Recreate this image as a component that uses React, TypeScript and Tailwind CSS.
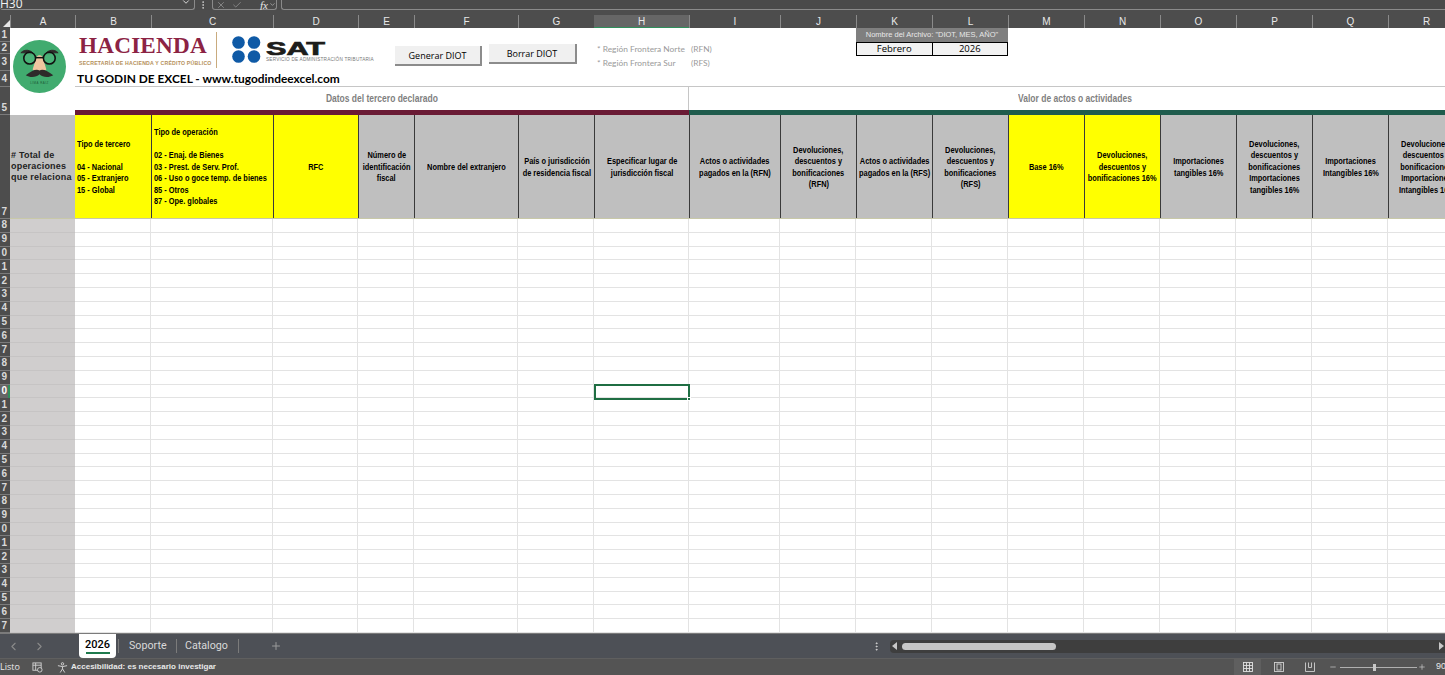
import { Check, ChevronDown, ChevronLeft, ChevronRight, EllipsisVertical, Minus, Plus, X } from 'lucide-react';

const columns = [
  { name: 'A', w: 65 },
  { name: 'B', w: 76 },
  { name: 'C', w: 122 },
  { name: 'D', w: 85 },
  { name: 'E', w: 56 },
  { name: 'F', w: 104 },
  { name: 'G', w: 76 },
  { name: 'H', w: 95 },
  { name: 'I', w: 91 },
  { name: 'J', w: 76 },
  { name: 'K', w: 76 },
  { name: 'L', w: 76 },
  { name: 'M', w: 76 },
  { name: 'N', w: 76 },
  { name: 'O', w: 76 },
  { name: 'P', w: 76 },
  { name: 'Q', w: 76 },
  { name: 'R', w: 76 },
];

const headers = [
  { lines: ['Número de', 'identificación', 'fiscal'], w: 56 },
  { lines: ['Nombre del extranjero'], w: 104 },
  { lines: ['País o jurisdicción', 'de residencia fiscal'], w: 76 },
  { lines: ['Especificar lugar de', 'jurisdicción fiscal'], w: 95 },
  { lines: ['Actos o actividades', 'pagados en la (RFN)'], w: 91 },
  { lines: ['Devoluciones,', 'descuentos y', 'bonificaciones', '(RFN)'], w: 76 },
  { lines: ['Actos o actividades', 'pagados en la (RFS)'], w: 76 },
  { lines: ['Devoluciones,', 'descuentos y', 'bonificaciones', '(RFS)'], w: 76 },
  { lines: ['Base 16%'], w: 76, yellow: true },
  { lines: ['Devoluciones,', 'descuentos y', 'bonificaciones 16%'], w: 76, yellow: true },
  { lines: ['Importaciones', 'tangibles 16%'], w: 76 },
  { lines: ['Devoluciones,', 'descuentos y', 'bonificaciones', 'Importaciones', 'tangibles 16%'], w: 76 },
  { lines: ['Importaciones', 'Intangibles 16%'], w: 76 },
  { lines: ['Devoluciones,', 'descuentos y', 'bonificaciones', 'Importaciones', 'Intangibles 16%'], w: 76 },
];

const topRows = [
  { n: '1', h: 14, end: false },
  { n: '2', h: 12, end: false },
  { n: '3', h: 17, end: false },
  { n: '4', h: 16, end: false },
  { n: '5', h: 28, end: true },
  { n: '7', h: 104, end: true },
];

const rows = Array.from({ length: 30 }, (_, i) => i + 8);

function Logo() {
  return (
    <svg viewBox="0 0 54 54" className="h-[53px] w-[53px]">
      <circle cx="27" cy="27" r="27" fill="#41ab6f" />
      <path d="M8 13c4-4 10-3 13 1l-4 0c-3-1-6-1-9-1zM46 13c-4-4-10-3-13 1l4 0c3-1 6-1 9-1z" fill="#2e2a2a" stroke="#2e2a2a" strokeWidth="1" />
      <path d="M24 17c2-2 4-2 6 0l4 13c-3 3-11 3-14 0z" fill="#f0c5a0" />
      <circle cx="17" cy="18.5" r="6" fill="#4fb67c" fillOpacity="0.7" stroke="#111" strokeWidth="1.6" />
      <circle cx="37" cy="18.5" r="6" fill="#4fb67c" fillOpacity="0.7" stroke="#111" strokeWidth="1.6" />
      <path d="M23 18h8" stroke="#111" strokeWidth="1.5" />
      <path d="M27 31c-3-2-8 0-14 5 5 3 11 2 14-1 3 3 9 4 14 1-6-5-11-7-14-5z" fill="#2e2a2a" />
      <text x="27" y="45" textAnchor="middle" fontSize="3" fill="#1f5c3a" letterSpacing="0.5">
        LIMA RAIZ
      </text>
    </svg>
  );
}

function SatBlue() {
  return (
    <svg viewBox="0 0 31 27" className="h-[27px] w-[31px]">
      <circle cx="7.5" cy="6.5" r="6.3" fill="#0f5aa6" />
      <circle cx="23" cy="6.5" r="6.3" fill="#0f5aa6" />
      <circle cx="7.5" cy="20.5" r="6.3" fill="#0f5aa6" />
      <circle cx="23" cy="20.5" r="6.3" fill="#0f5aa6" />
    </svg>
  );
}

export default function App() {
  return (
    <div className="flex h-[675px] w-[1445px] flex-col overflow-hidden bg-white font-['Liberation_Sans',sans-serif]">
      {/* Formula bar */}
      <div className="flex h-[10px] shrink-0 items-end overflow-hidden bg-[#4a4a4a] text-[#f2f2f2]">
        <div className="flex h-[10px] w-[195px] items-end justify-between overflow-hidden rounded-b-[3px] border-b border-r border-[#8a8a8a] pr-[3px] text-[12px] leading-[12px]">
          <span className="mb-[-1px] font-['Open_Sans',sans-serif]">H30</span>
          <ChevronDown size={10} className="mb-[2px]" />
        </div>
        <EllipsisVertical size={10} className="ml-[3px] text-[#d0d0d0]" />
        <div className="ml-[4px] flex h-[10px] w-[65px] items-center rounded-b-[3px] border-x border-b border-[#8a8a8a] pl-[3px] text-[#8f8f8f]">
          <X size={10} />
          <Check size={10} className="ml-[6px]" />
          <span className="ml-[18px] font-['Liberation_Serif',serif] text-[11px] italic leading-[10px] text-[#e8e8e8]">fx</span>
          <ChevronDown size={7} className="ml-[1px] text-[#c8c8c8]" />
        </div>
        <div className="ml-[4px] h-[10px] flex-1 rounded-bl-[3px] border-b border-l border-[#8a8a8a]" />
      </div>

      {/* Column letters */}
      <div className="flex h-[18px] shrink-0 bg-[#4d4d4d] pt-[5px]">
        <div className="flex w-[10px] shrink-0 items-end justify-end">
          <div className="mb-[1px] h-0 w-0 border-b-[7px] border-l-[7px] border-b-[#e6e6e6] border-l-transparent" />
        </div>
        {columns.map((c) => (
          <div
            key={c.name}
            style={{ width: c.w }}
            className={
              c.name === 'H'
                ? 'flex shrink-0 items-center justify-center border-b border-[#2f8f5b] bg-[#666666] text-[10px] text-[#e8e8e8]'
                : 'flex shrink-0 items-center justify-center border-l border-[#8a8a8a] text-[10px] text-[#e8e8e8]'
            }
          >
            {c.name}
          </div>
        ))}
      </div>

      {/* Sheet */}
      <div className="flex min-h-0 flex-1">
        {/* Row numbers */}
        <div className="flex w-[10px] shrink-0 flex-col overflow-hidden bg-[#4d4d4d] text-[10px] font-bold text-[#d9d9d9]">
          {topRows.map((r) => (
            <div
              key={r.n}
              style={{ height: r.h }}
              className={
                r.end
                  ? 'flex shrink-0 items-end justify-end border-b border-[#7b7b7b] pr-[3px] leading-[12px]'
                  : 'flex shrink-0 items-center justify-end border-b border-[#7b7b7b] pr-[3px] leading-[12px]'
              }
            >
              {r.n}
            </div>
          ))}
          {rows.map((r) => (
            <div
              key={r}
              className={
                r === 20
                  ? 'flex h-[13.8px] shrink-0 items-center justify-end border-r-2 border-[#2f8f5b] bg-[#666666] pr-[1px] leading-none text-white'
                  : 'flex h-[13.8px] shrink-0 items-center justify-end border-b border-[#7b7b7b] pr-[3px] leading-none'
              }
            >
              {r % 10}
            </div>
          ))}
        </div>

        <div className="min-w-0 flex-1 overflow-hidden">
          {/* Top area, the floating shapes of the sheet */}
          <div className="relative flex h-[59px] w-[1500px] bg-white">
            <div className="w-[65px] shrink-0" />
            <div className="flex-1 border-b border-[#c6c6c6] pl-[4px] pt-[4px]">
              <div className="flex flex-col">
                <span className="font-['Liberation_Serif',serif] text-[23.2px] font-bold leading-[27px] tracking-[0.2px] text-[#8c2344]">HACIENDA</span>
                <span className="whitespace-nowrap text-[5.2px] font-bold leading-[8px] tracking-[0.2px] text-[#b5905a]">SECRETARÍA DE HACIENDA Y CRÉDITO PÚBLICO</span>
              </div>
            </div>
            <div className="absolute left-[206px] top-[4px] h-[36px] w-px bg-[#c9ab7e]" />
            <div className="absolute left-[221px] top-[8px] flex items-center gap-[4px]">
              <SatBlue />
              <div className="flex flex-col pt-[4px]">
                <span className="origin-left scale-x-[1.7] text-[18px] font-black leading-[16px] text-[#1d1d1b] [-webkit-text-stroke:0.7px_#1d1d1b]">SAT</span>
                <span className="whitespace-nowrap text-[4.7px] leading-[6px] tracking-[0.2px] text-[#777777]">SERVICIO DE ADMINISTRACIÓN TRIBUTARIA</span>
              </div>
            </div>
            <span className="absolute left-[67px] top-[43px] font-['Lato',sans-serif] text-[11.9px] font-bold leading-[16px] text-black">TU GODIN DE EXCEL - www.tugodindeexcel.com</span>

            {/* Buttons */}
            <div className="absolute left-[385px] top-[18px] flex h-[20px] w-[87px] items-center justify-center border-b-2 border-r-2 border-[#8c8c8c] bg-[#f0f0f0] pt-[1px] font-['Open_Sans',sans-serif] text-[9px] text-black">Generar DIOT</div>
            <div className="absolute left-[479px] top-[16px] flex h-[20px] w-[88px] items-center justify-center border-b-2 border-r-2 border-[#8c8c8c] bg-[#f0f0f0] pt-[1px] font-['Open_Sans',sans-serif] text-[9px] text-black">Borrar DIOT</div>

            <div className="absolute left-[587px] top-[15.5px] flex flex-col gap-[3px] whitespace-nowrap font-['Lato',sans-serif] text-[8.4px] leading-[11px] text-[#9a9a9a]">
              <div className="flex"><span className="w-[94px]">* Región Frontera Norte</span><span>(RFN)</span></div>
              <div className="flex"><span className="w-[94px]">* Región Frontera Sur</span><span>(RFS)</span></div>
            </div>

            {/* File name */}
            <div className="absolute left-[846px] top-0 w-[152px]">
              <div className="flex h-[14px] items-center justify-center whitespace-nowrap bg-[#7f7f7f] text-[7.5px] text-[#e8e8e8]">Nombre del Archivo: "DIOT, MES, AÑO"</div>
              <div className="flex h-[14px] border border-black bg-[#f2f2f2] font-['Open_Sans',sans-serif] text-[9.5px] text-black">
                <div className="flex flex-1 items-center justify-center border-r border-black">Febrero</div>
                <div className="flex flex-1 items-center justify-center">2026</div>
              </div>
            </div>

            <div className="absolute left-[2.5px] top-[12px]"><Logo /></div>
          </div>

          {/* Section titles */}
          <div className="flex w-[1500px]">
            <div className="h-[28px] w-[65px] shrink-0 bg-white" />
            <div className="flex w-[614px] shrink-0 flex-col">
              <div className="flex h-[23px] items-center justify-center border-r border-[#c6c6c6] text-[10px] font-bold text-[#7f7f7f]">
                <span className="scale-x-[0.85] whitespace-nowrap">Datos del tercero declarado</span>
              </div>
              <div className="h-[5px] bg-[#6a1b35]" />
            </div>
            <div className="flex flex-1 flex-col">
              <div className="flex h-[23px] w-[771px] items-center justify-center text-[10px] font-bold text-[#7f7f7f]">
                <span className="scale-x-[0.85] whitespace-nowrap">Valor de actos o actividades</span>
              </div>
              <div className="h-[5px] bg-[#1f5c4d]" />
            </div>
          </div>

          {/* Header row */}
          <div className="flex h-[104px] w-[1500px] border-b border-[#c8c8a8] text-[9.5px] font-bold leading-[11.5px] text-black">
            <div className="flex w-[65px] shrink-0 items-center whitespace-pre bg-[#bfbfbf] pl-[1px] text-[9px] leading-[11.2px] tracking-[0.2px] text-[#222222]">
              {'# Total de\noperaciones\nque relaciona'}
            </div>
            <div className="flex w-[76px] shrink-0 flex-col justify-center whitespace-pre bg-[#ffff00] pl-[2px]">
              <span className="origin-left scale-x-[0.78]">{'Tipo de tercero\n\n04 - Nacional\n05 - Extranjero\n15 - Global'}</span>
            </div>
            <div className="flex w-[122px] shrink-0 flex-col justify-center whitespace-pre border-l border-[#3a3a3a] bg-[#ffff00] pl-[2px]">
              <span className="origin-left scale-x-[0.78]">{'Tipo de operación\n\n02 - Enaj. de Bienes\n03 - Prest. de Serv. Prof.\n06 - Uso o goce temp. de bienes\n85 - Otros\n87 - Ope. globales'}</span>
            </div>
            <div className="flex w-[85px] shrink-0 items-center justify-center border-l border-[#3a3a3a] bg-[#ffff00]">
              <span className="scale-x-[0.78]">RFC</span>
            </div>
            {headers.map((h, i) => (
              <div
                key={i}
                style={{ width: h.w }}
                className={
                  h.yellow
                    ? 'flex shrink-0 flex-col items-center justify-center whitespace-nowrap border-l border-[#3a3a3a] bg-[#ffff00] text-center'
                    : 'flex shrink-0 flex-col items-center justify-center whitespace-nowrap border-l border-[#3a3a3a] bg-[#bfbfbf] text-center'
                }
              >
                {h.lines.map((l) => (
                  <span key={l} className="scale-x-[0.78]">{l}</span>
                ))}
              </div>
            ))}
          </div>

          {/* Data rows */}
          <div className="relative w-[1500px]">
            {rows.map((r) => (
              <div key={r} className="flex h-[13.8px]">
                {columns.map((c) => (
                  <div
                    key={c.name}
                    style={{ width: c.w }}
                    className={
                      c.name === 'A'
                        ? 'shrink-0 border-b border-[#c6c4c4] bg-[#d0cece]'
                        : 'shrink-0 border-b border-r border-[#e3e3e3]'
                    }
                  />
                ))}
              </div>
            ))}
            {/* Selected cell */}
            <div className="absolute left-[584px] top-[165px] h-[16px] w-[96px] border-2 border-[#1f6e43]">
              <div className="absolute bottom-[-3px] right-[-3px] h-[4px] w-[4px] border border-white bg-[#1f6e43]" />
            </div>
          </div>
        </div>
      </div>

      {/* Sheet tabs */}
      <div className="flex h-[25px] shrink-0 items-center border-t border-[#7b7b7b] bg-[#4d5056] font-['Roboto',sans-serif] text-[10.7px] text-[#d9d9d9]">
        <div className="flex w-[79px] shrink-0 items-center gap-[13px] pl-[7px] text-[#8a8a8a]">
          <ChevronLeft size={13} />
          <ChevronRight size={13} />
        </div>
        <div className="flex h-[24px] w-[37px] shrink-0 flex-col items-center justify-center rounded-b-[4px] bg-white text-[11px] font-medium text-black">
          <span className="leading-[14px]">2026</span>
          <span className="h-[2px] w-[24px] bg-[#1f7a4d]" />
        </div>
        <div className="ml-[2px] flex h-[14px] w-[58px] items-center border-l border-[#7b7b7b] pl-[10px]">Soporte</div>
        <div className="flex h-[14px] w-[63px] items-center border-x border-[#7b7b7b] pl-[8px]">Catalogo</div>
        <Plus size={12} className="ml-[31px] text-[#9a9a9a]" />
        <div className="flex-1" />
        <EllipsisVertical size={11} className="mr-[8px] text-[#d9d9d9]" />
        <div className="flex h-[13px] w-[555px] shrink-0 items-center rounded-l-[4px] bg-[#3e3e3e]">
          <div className="ml-[2px] h-0 w-0 border-y-[4px] border-r-[5px] border-y-transparent border-r-[#c8c8c8]" />
          <div className="ml-[5px] h-[7px] w-[154px] rounded-full bg-[#c6c6c6]" />
          <div className="flex-1" />
          <div className="mr-[1px] h-0 w-0 border-y-[4px] border-l-[5px] border-y-transparent border-l-[#c8c8c8]" />
        </div>
      </div>

      {/* Status bar */}
      <div className="flex h-[17px] shrink-0 items-center border-t border-[#5f5f5f] bg-[#545454] text-[9px] text-[#e8e8e8]">
        <span className="w-[32px] shrink-0 font-['Open_Sans',sans-serif]">Listo</span>
        <svg viewBox="0 0 12 12" className="h-[11px] w-[11px] text-[#d0d0d0]" fill="none" stroke="currentColor" strokeWidth="1">
          <rect x="1" y="1" width="9" height="8" />
          <path d="M1 3.5h9M4 1v8" />
          <circle cx="8.5" cy="8.5" r="2.5" fill="#545454" />
        </svg>
        <svg viewBox="0 0 12 12" className="ml-[14px] h-[11px] w-[11px] text-[#d9d9d9]" fill="none" stroke="currentColor" strokeWidth="1">
          <circle cx="6" cy="2" r="1.3" />
          <path d="M1 4l5 1 5-1M6 5v2.5M6 7.5l-2.5 4M6 7.5l2.5 4" />
        </svg>
        <span className="ml-[3px] text-[8px] font-bold">Accesibilidad: es necesario investigar</span>
        <div className="flex-1" />
        <div className="flex h-[16px] w-[27px] items-center justify-center bg-[#5f5f5f]">
          <svg viewBox="0 0 10 10" className="h-[10px] w-[10px]" fill="none" stroke="#e0e0e0" strokeWidth="0.9">
            <rect x="0.5" y="0.5" width="9" height="9" />
            <path d="M3.5 0.5v9M6.5 0.5v9M0.5 3.5h9M0.5 6.5h9" />
          </svg>
        </div>
        <svg viewBox="0 0 10 10" className="ml-[13px] h-[10px] w-[10px]" fill="none" stroke="#d0d0d0" strokeWidth="0.9">
          <rect x="0.5" y="0.5" width="9" height="9" />
          <rect x="3" y="2" width="4" height="6" />
        </svg>
        <svg viewBox="0 0 10 10" className="ml-[21px] h-[10px] w-[10px]" fill="none" stroke="#d0d0d0" strokeWidth="0.9">
          <path d="M0.5 0.5v9h9v-9M3.5 0.5v5h3v-5" />
        </svg>
        <Minus size={8} className="ml-[14px] text-[#d0d0d0]" />
        <div className="relative ml-[3px] h-px w-[77px] bg-[#b0b0b0]">
          <div className="absolute left-[33px] top-[-3px] h-[7px] w-[3px] bg-[#c8c8c8]" />
        </div>
        <Plus size={8} className="ml-[1px] text-[#d0d0d0]" />
        <span className="ml-[10px] w-[9px] overflow-hidden whitespace-nowrap text-[9px]">90%</span>
      </div>
    </div>
  );
}
